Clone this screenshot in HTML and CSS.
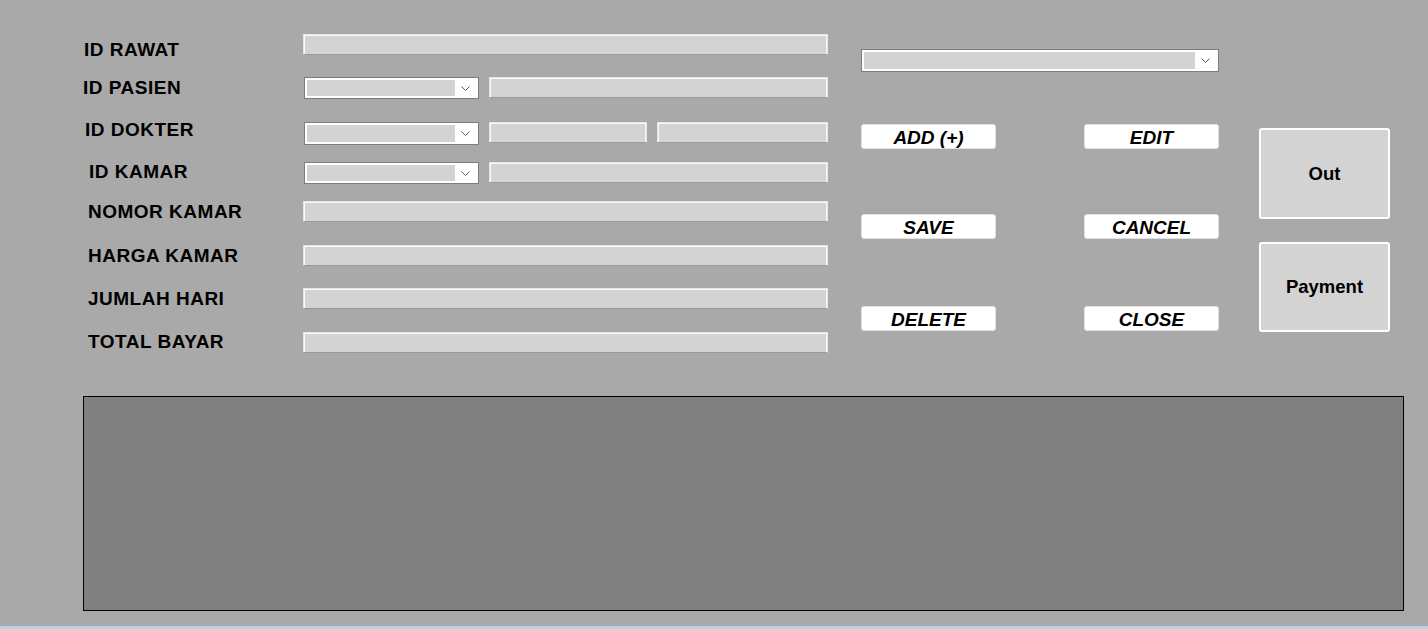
FILE: index.html
```html
<!DOCTYPE html>
<html>
<head>
<meta charset="utf-8">
<link rel="stylesheet" href="styles.css">
</head>
<body>
<div class="window">
  <div class="top">
    <div class="form">
      <div class="row">
        <span class="label l1">ID RAWAT</span>
        <div class="fields"><div class="textbox grow"></div></div>
      </div>
      <div class="row">
        <span class="label l0">ID PASIEN</span>
        <div class="fields">
          <div class="combo small"><div class="combo-fill"></div><div class="combo-arrow"><svg width="9" height="6" viewBox="0 0 9 6"><polyline points="0.5,0.5 4.5,4.5 8.5,0.5" fill="none" stroke="#5a5a5a" stroke-width="1"/></svg></div></div>
          <div class="textbox grow"></div>
        </div>
      </div>
      <div class="row">
        <span class="label l2 up3">ID DOKTER</span>
        <div class="fields">
          <div class="combo small tall"><div class="combo-fill"></div><div class="combo-arrow"><svg width="9" height="6" viewBox="0 0 9 6"><polyline points="0.5,0.5 4.5,4.5 8.5,0.5" fill="none" stroke="#5a5a5a" stroke-width="1"/></svg></div></div>
          <div class="textbox doc1"></div>
          <div class="textbox grow"></div>
        </div>
      </div>
      <div class="row">
        <span class="label l6 up1">ID KAMAR</span>
        <div class="fields">
          <div class="combo small"><div class="combo-fill"></div><div class="combo-arrow"><svg width="9" height="6" viewBox="0 0 9 6"><polyline points="0.5,0.5 4.5,4.5 8.5,0.5" fill="none" stroke="#5a5a5a" stroke-width="1"/></svg></div></div>
          <div class="textbox grow"></div>
        </div>
      </div>
      <div class="row">
        <span class="label l5">NOMOR KAMAR</span>
        <div class="fields"><div class="textbox grow"></div></div>
      </div>
      <div class="row">
        <span class="label l5">HARGA KAMAR</span>
        <div class="fields"><div class="textbox grow"></div></div>
      </div>
      <div class="row">
        <span class="label l5">JUMLAH HARI</span>
        <div class="fields"><div class="textbox grow"></div></div>
      </div>
      <div class="row">
        <span class="label l5 up1">TOTAL BAYAR</span>
        <div class="fields"><div class="textbox grow"></div></div>
      </div>
    </div>

    <div class="actions">
      <div class="combo wide"><div class="combo-fill"></div><div class="combo-arrow"><svg width="9" height="6" viewBox="0 0 9 6"><polyline points="0.5,0.5 4.5,4.5 8.5,0.5" fill="none" stroke="#5a5a5a" stroke-width="1"/></svg></div></div>
      <div class="btn-row"><button class="btn">ADD (+)</button><button class="btn">EDIT</button></div>
      <div class="btn-row"><button class="btn">SAVE</button><button class="btn">CANCEL</button></div>
      <div class="btn-row"><button class="btn">DELETE</button><button class="btn">CLOSE</button></div>
    </div>

    <div class="side">
      <button class="big-btn">Out</button>
      <button class="big-btn">Payment</button>
    </div>
  </div>

  <div class="grid-view"></div>
</div>
<div class="taskbar-edge"></div>
</body>
</html>
```

FILE: styles.css
```css
html, body {
  margin: 0;
  padding: 0;
}
body {
  width: 1428px;
  height: 629px;
  overflow: hidden;
  background: #a9a9a9;
  font-family: "Liberation Sans", Arial, sans-serif;
  display: flex;
  flex-direction: column;
}
.window {
  height: 626px;
  display: flex;
  flex-direction: column;
}
.top {
  display: flex;
  height: 396px;
  flex: none;
}
.form {
  margin-left: 83px;
  width: 745px;
  padding-top: 34px;
  display: grid;
  grid-template-rows: 43px 45px 40px 39px 44px 43px 44px 22px;
  align-content: start;
}
.row {
  display: flex;
  align-items: flex-start;
}
.label {
  width: 220px;
  flex: none;
  box-sizing: border-box;
  font-size: 19px;
  font-weight: bold;
  letter-spacing: 0.5px;
  line-height: 22px;
  color: #000;
  white-space: nowrap;
}
.l0 { padding-left: 0; }
.l1 { padding-left: 1px; margin-top: 5px; }
.l2 { padding-left: 2px; }
.l5 { padding-left: 5px; }
.l6 { padding-left: 6px; }
.up1 { margin-top: -1px; }
.up3 { margin-top: -3px; }
.fields {
  flex: 1;
  display: flex;
  gap: 10px;
}
.textbox {
  height: 21px;
  box-sizing: border-box;
  background: #d3d3d3;
  border: 1px solid #e4e4e4;
  border-bottom-color: #9a9a9a;
  border-right-color: #e8e8e8;
  box-shadow: inset 1px 1px 0 #fbfbfb, inset -1px 0 0 #f4f4f4;
}
.grow { flex: 1; }
.doc1 { width: 158px; flex: none; }
.combo {
  display: flex;
  box-sizing: border-box;
  height: 22px;
  border: 1px solid #7d7d7d;
  background: #fff;
  padding: 2px 2px 2px 2px;
}
.combo.small {
  width: 175px;
  margin-left: 1px;
  flex: none;
}
.combo.tall { height: 23px; }
.combo.wide {
  width: 358px;
  height: 23px;
}
.combo-fill {
  flex: 1;
  background: #d3d3d3;
}
.combo-arrow {
  width: 21px;
  display: flex;
  align-items: center;
  justify-content: center;
  padding-top: 1px;
}
.actions {
  margin-left: 33px;
  width: 358px;
  padding-top: 49px;
  display: grid;
  grid-template-rows: 75px 90px 92px 25px;
  align-content: start;
}
.btn-row {
  display: flex;
  justify-content: space-between;
}
.btn {
  width: 135px;
  height: 25px;
  margin: 0;
  padding: 2px 0 0 0;
  box-sizing: border-box;
  background: #fff;
  border: 1px solid #e2e2e2;
  border-radius: 3px;
  font-family: "Liberation Sans", Arial, sans-serif;
  font-size: 19px;
  font-weight: bold;
  font-style: italic;
  line-height: 20px;
  color: #000;
}
.side {
  margin-left: 40px;
  padding-top: 128px;
  display: flex;
  flex-direction: column;
  gap: 23px;
}
.big-btn {
  width: 131px;
  height: 91px;
  margin: 0;
  padding: 0;
  box-sizing: border-box;
  background: #d3d3d3;
  border: 2px solid #fff;
  border-radius: 3px;
  font-family: "Liberation Sans", Arial, sans-serif;
  font-size: 18.5px;
  font-weight: bold;
  color: #000;
}
.big-btn + .big-btn { height: 90px; }
.grid-view {
  margin-left: 83px;
  width: 1321px;
  height: 215px;
  box-sizing: border-box;
  background: #808080;
  border: 1px solid #000;
  flex: none;
}
.taskbar-edge {
  height: 3px;
  background: #b9d1ea;
  flex: none;
}
```
